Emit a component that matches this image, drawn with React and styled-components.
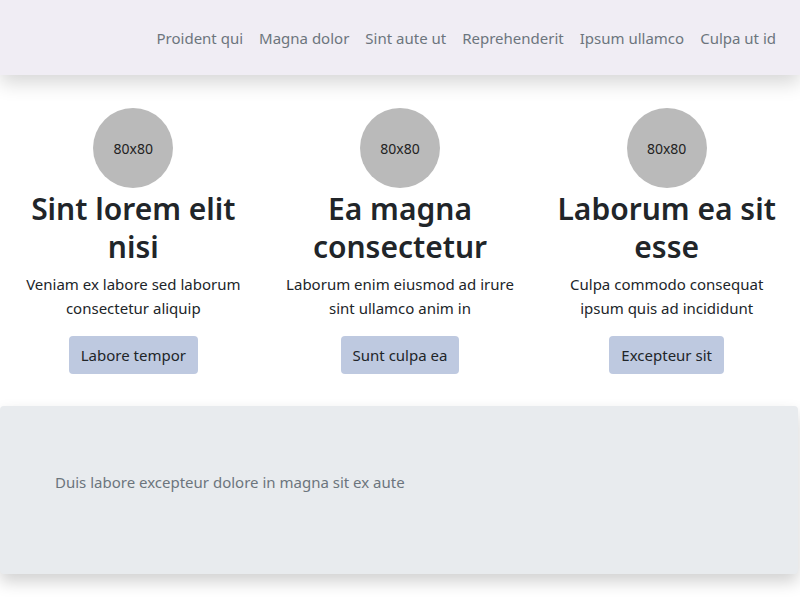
import React from 'react';
import styled, { createGlobalStyle } from 'styled-components';

const GlobalStyle = createGlobalStyle`
  body {
    margin: 0;
    background: #ffffff;
    font-family: "Noto Sans", "Open Sans", sans-serif;
    color: #212529;
  }
  * { box-sizing: border-box; }
`;

const links = ['Proident qui', 'Magna dolor', 'Sint aute ut', 'Reprehenderit', 'Ipsum ullamco', 'Culpa ut id'];

const cards = [
  { title: 'Sint lorem elit nisi', text: 'Veniam ex labore sed laborum consectetur aliquip', button: 'Labore tempor' },
  { title: 'Ea magna consectetur', text: 'Laborum enim eiusmod ad irure sint ullamco anim in', button: 'Sunt culpa ea' },
  { title: 'Laborum ea sit esse', text: 'Culpa commodo consequat ipsum quis ad incididunt', button: 'Excepteur sit' },
];

export default function App() {
  return (
    <>
      <GlobalStyle />
      <Header>
        <Nav>
          {links.map((l) => (
            <NavLink key={l} href="#">{l}</NavLink>
          ))}
        </Nav>
      </Header>
      <Features>
        {cards.map(({ title, text, button }) => (
          <Card key={title}>
            <Avatar>80x80</Avatar>
            <Title>{title}</Title>
            <Text>{text}</Text>
            <Button>{button}</Button>
          </Card>
        ))}
      </Features>
      <Banner>
        <BannerText>Duis labore excepteur dolore in magna sit ex aute</BannerText>
      </Banner>
    </>
  );
}

const Header = styled.header`
  height: 75px;
  background: #f0edf4;
  box-shadow: 0 8px 18px rgba(0, 0, 0, 0.16);
  display: flex;
  align-items: center;
  justify-content: flex-end;
  padding: 0 24px;
  position: relative;
  z-index: 1;
`;

const Nav = styled.nav`
  display: flex;
  gap: 16px;
`;

const NavLink = styled.a`
  color: #6c757d;
  text-decoration: none;
  font-size: 15px;
  line-height: 24px;
`;

const Features = styled.section`
  display: grid;
  grid-template-columns: repeat(3, 1fr);
  padding: 33px 0 32px;
`;

const Card = styled.div`
  display: flex;
  flex-direction: column;
  align-items: center;
  text-align: center;
  padding: 0 12px;
`;

const Avatar = styled.div`
  width: 80px;
  height: 80px;
  border-radius: 50%;
  background: #bababa;
  display: flex;
  align-items: center;
  justify-content: center;
  font-size: 14px;
  color: #222;
`;

const Title = styled.h2`
  margin: 2px 0 6px;
  font-size: 30px;
  line-height: 38px;
  font-weight: 600;
  color: #212529;
  max-width: 230px;
`;

const Text = styled.p`
  margin: 0 0 16px;
  font-size: 15px;
  line-height: 24px;
  color: #212529;
  max-width: 230px;
`;

const Button = styled.button`
  font-family: inherit;
  font-size: 15px;
  line-height: 24px;
  padding: 7px 12px;
  border: none;
  border-radius: 4px;
  background: #bec9e0;
  color: #212529;
`;

const Banner = styled.section`
  background: #e8ebee;
  border-radius: 4px;
  box-shadow: 0 8px 16px rgba(0, 0, 0, 0.18);
  padding: 64px 55px 64px;
  margin: 0 2px 26px 0;
`;

const BannerText = styled.p`
  margin: 0 0 16px;
  color: #6c757d;
  font-size: 15px;
  line-height: 24px;
`;
